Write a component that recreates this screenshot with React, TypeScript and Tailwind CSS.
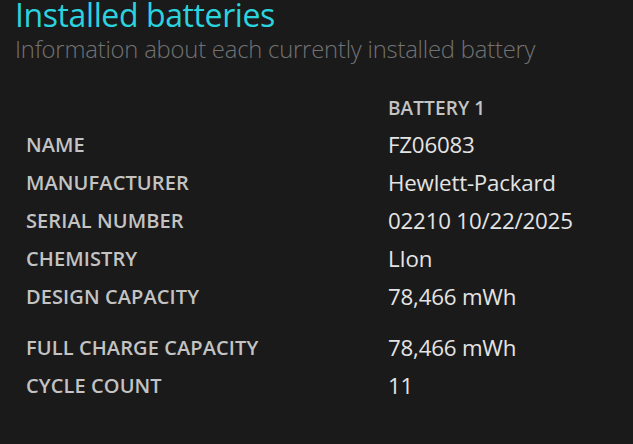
import React from "react";

const rows: { label: string; value: string; extra?: boolean }[] = [
  { label: "NAME", value: "FZ06083" },
  { label: "MANUFACTURER", value: "Hewlett-Packard" },
  { label: "SERIAL NUMBER", value: "02210 10/22/2025" },
  { label: "CHEMISTRY", value: "LIon" },
  { label: "DESIGN CAPACITY", value: "78,466 mWh" },
  { label: "FULL CHARGE CAPACITY", value: "78,466 mWh", extra: true },
  { label: "CYCLE COUNT", value: "11" },
];

export default function App() {
  return (
    <div
      className="w-[633px] h-[444px] bg-[#1a1a1a] overflow-hidden"
      style={{ fontFamily: '"Open Sans", "Noto Sans", sans-serif' }}
    >
      <h1 className="pl-[15px] pt-[1px] text-[32px] leading-[28px] text-[#2bd3de] font-normal tracking-[-0.4px]">
        Installed batteries
      </h1>
      <p className="pl-[15px] mt-[5px] text-[23.8px] leading-[30px] text-[#727272] font-light tracking-[-0.2px]">
        Information about each currently installed battery
      </p>
      <div className="mt-[26px] grid grid-cols-[362px_1fr] pl-[26px]">
        <div />
        <div className="text-[19px] leading-[36px] font-semibold text-[#c3c3c3] tracking-[0.1px]">
          BATTERY 1
        </div>
        {rows.map((r) => (
          <React.Fragment key={r.label}>
            <div
              className={`text-[20px] leading-[38px] font-semibold text-[#c3c3c3] tracking-[0.1px] ${
                r.extra ? "mt-[13px]" : ""
              }`}
            >
              {r.label}
            </div>
            <div
              className={`text-[22.3px] leading-[38px] text-[#e4e4e4] tracking-[-0.2px] ${
                r.extra ? "mt-[13px]" : ""
              }`}
            >
              {r.value}
            </div>
          </React.Fragment>
        ))}
      </div>
    </div>
  );
}
